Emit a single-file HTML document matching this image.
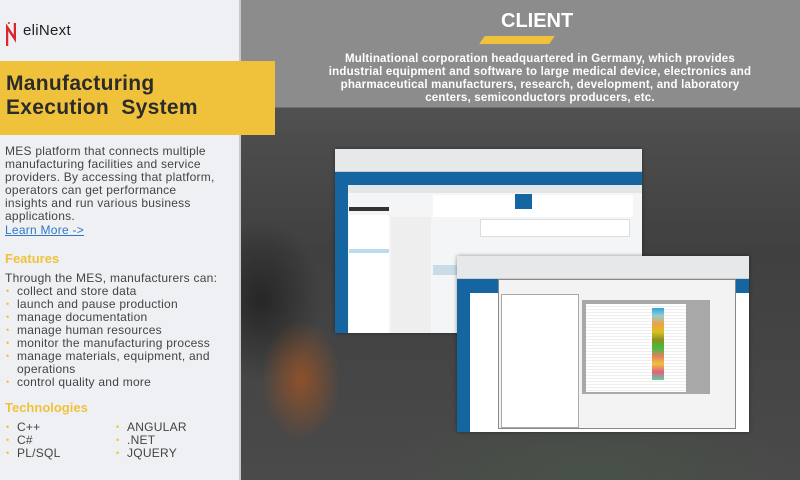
<!DOCTYPE html>
<html><head><meta charset="utf-8"><style>
*{margin:0;padding:0;box-sizing:border-box}
body{width:800px;height:480px;overflow:hidden;position:relative;font-family:"Liberation Sans",sans-serif;background:#3a3a3a}
.bg{position:absolute;left:241px;top:0;width:559px;height:480px;background:
radial-gradient(ellipse 40px 60px at 60px 380px,rgba(200,90,20,.55),transparent),
radial-gradient(ellipse 60px 80px at 20px 300px,rgba(20,20,20,.6),transparent),
radial-gradient(ellipse 200px 60px at 350px 470px,rgba(70,90,70,.5),transparent),
linear-gradient(180deg,#8c8c8c 0,#8c8c8c 107px,#505050 108px,#404040 250px,#4a4a4a 480px)}
.left{position:absolute;left:0;top:0;width:241px;height:480px;background:#eff0f3;border-right:2px solid #c8c8c8}
.yb{position:absolute;left:0;top:61px;width:275px;height:74px;background:#f0c23b}
.yb h1{font-size:21px;line-height:24px;color:#2b2b2b;font-weight:bold;padding:11px 0 0 6px;letter-spacing:.3px}
.txt{position:absolute;left:5px;font-size:12px;line-height:13px;color:#444;letter-spacing:.25px}
.h{position:absolute;left:5px;font-size:13px;font-weight:bold;color:#f0c23b}
ul{list-style:none}
li{position:relative;padding-left:12px}
li:before{content:"•";position:absolute;left:1px;color:#f0c23b;font-size:9px}
.win{position:absolute;background:#f4f5f6;box-shadow:0 0 4px rgba(0,0,0,.4)}
.b{position:absolute}
</style></head><body>
<div class="bg"></div>
<div class="left">
 <div style="position:absolute;left:6px;top:21px;width:10px;height:25px;">
  <svg width="10" height="25"><path d="M1 25V6L9 18V2" stroke="#d8272e" stroke-width="2.5" fill="none"/><circle cx="3" cy="2" r="1" fill="#d8272e"/></svg></div>
 <div style="position:absolute;left:23px;top:22px;font-size:15px;color:#222;letter-spacing:.3px">eliNext</div>
 <div class="txt" style="top:145px;width:236px">MES platform that connects multiple<br>manufacturing facilities and service<br>providers. By accessing that platform,<br>operators can get performance<br>insights and run various business<br>applications.</div>
 <div class="txt" style="top:224px;color:#2e77c8;text-decoration:underline">Learn More -&gt;</div>
 <div class="h" style="top:251px">Features</div>
 <div class="txt" style="top:272px">Through the MES, manufacturers can:
  <ul><li>collect and store data</li><li>launch and pause production</li><li>manage documentation</li><li>manage human resources</li><li>monitor the manufacturing process</li><li>manage materials, equipment, and<br>operations</li><li>control quality and more</li></ul></div>
 <div class="h" style="top:400px">Technologies</div>
 <div class="txt" style="top:421px"><ul><li>C++</li><li>C#</li><li>PL/SQL</li></ul></div>
 <div class="txt" style="top:421px;left:115px"><ul><li>ANGULAR</li><li>.NET</li><li>JQUERY</li></ul></div>
</div>
<div class="yb"><h1>Manufacturing<br>Execution&nbsp; System</h1></div>
<div style="position:absolute;left:501px;top:10px;font-size:20px;font-weight:bold;color:#fff">CLIENT</div>
<div style="position:absolute;left:482px;top:36px;width:70px;height:8px;background:#f0c23b;transform:skewX(-35deg)"></div>
<div style="position:absolute;left:300px;top:53px;width:480px;text-align:center;font-size:11.5px;line-height:13px;font-weight:bold;color:#fff;letter-spacing:.2px">Multinational corporation headquartered in Germany, which provides<br>industrial equipment and software to large medical device, electronics and<br>pharmaceutical manufacturers, research, development, and laboratory<br>centers, semiconductors producers, etc.</div>

<div class="win" style="left:335px;top:149px;width:307px;height:184px">
 <div style="height:23px;background:#e6e8ea;border-bottom:1px solid #ccc"></div>
 <div class="b" style="left:0;top:23px;width:307px;height:13px;background:#1565a0"></div>
 <div class="b" style="left:0;top:23px;width:13px;height:161px;background:#1565a0"></div>
 <div class="b" style="left:13px;top:36px;width:294px;height:8px;background:#e4e6e8"></div>
 <div class="b" style="left:14px;top:66px;width:40px;height:118px;background:#fff"></div>
 <div class="b" style="left:14px;top:58px;width:40px;height:4px;background:#333"></div>
 <div class="b" style="left:14px;top:100px;width:40px;height:4px;background:#b9dcee"></div>
 <div class="b" style="left:56px;top:68px;width:40px;height:116px;background:#eee"></div>
 <div class="b" style="left:98px;top:46px;width:200px;height:22px;background:#fff"></div>
 <div class="b" style="left:145px;top:70px;width:150px;height:18px;background:#fff;border:1px solid #ddd"></div>
 <div class="b" style="left:180px;top:45px;width:17px;height:15px;background:#1565a0"></div>
 <div class="b" style="left:98px;top:116px;width:30px;height:10px;background:#c8dce8"></div>
</div>
<div class="win" style="left:457px;top:256px;width:292px;height:176px;background:#fff">
 <div style="height:23px;background:#e6e8ea;border-bottom:1px solid #ccc"></div>
 <div class="b" style="left:0;top:23px;width:292px;height:14px;background:#1565a0"></div>
 <div class="b" style="left:0;top:23px;width:13px;height:153px;background:#1565a0"></div>
 <div class="b" style="left:41px;top:23px;width:238px;height:150px;background:#f3f3f3;border:1px solid #888">
  <div class="b" style="left:2px;top:14px;width:78px;height:134px;background:#fff;border:1px solid #aaa"></div>
  <div class="b" style="left:83px;top:20px;width:128px;height:94px;background:#a8a8a8">
   <div class="b" style="left:4px;top:4px;width:100px;height:88px;background:repeating-linear-gradient(#fff 0,#fff 2px,#ddd 3px);"></div>
   <div class="b" style="left:70px;top:8px;width:12px;height:72px;background:linear-gradient(#29a8e0,#9cc,#f0a040,#d8c020,#8a9020,#40c040,#e08060,#f0c040,#e06080,#60d0a0)"></div>
  </div>
 </div>
</div>
</body></html>
